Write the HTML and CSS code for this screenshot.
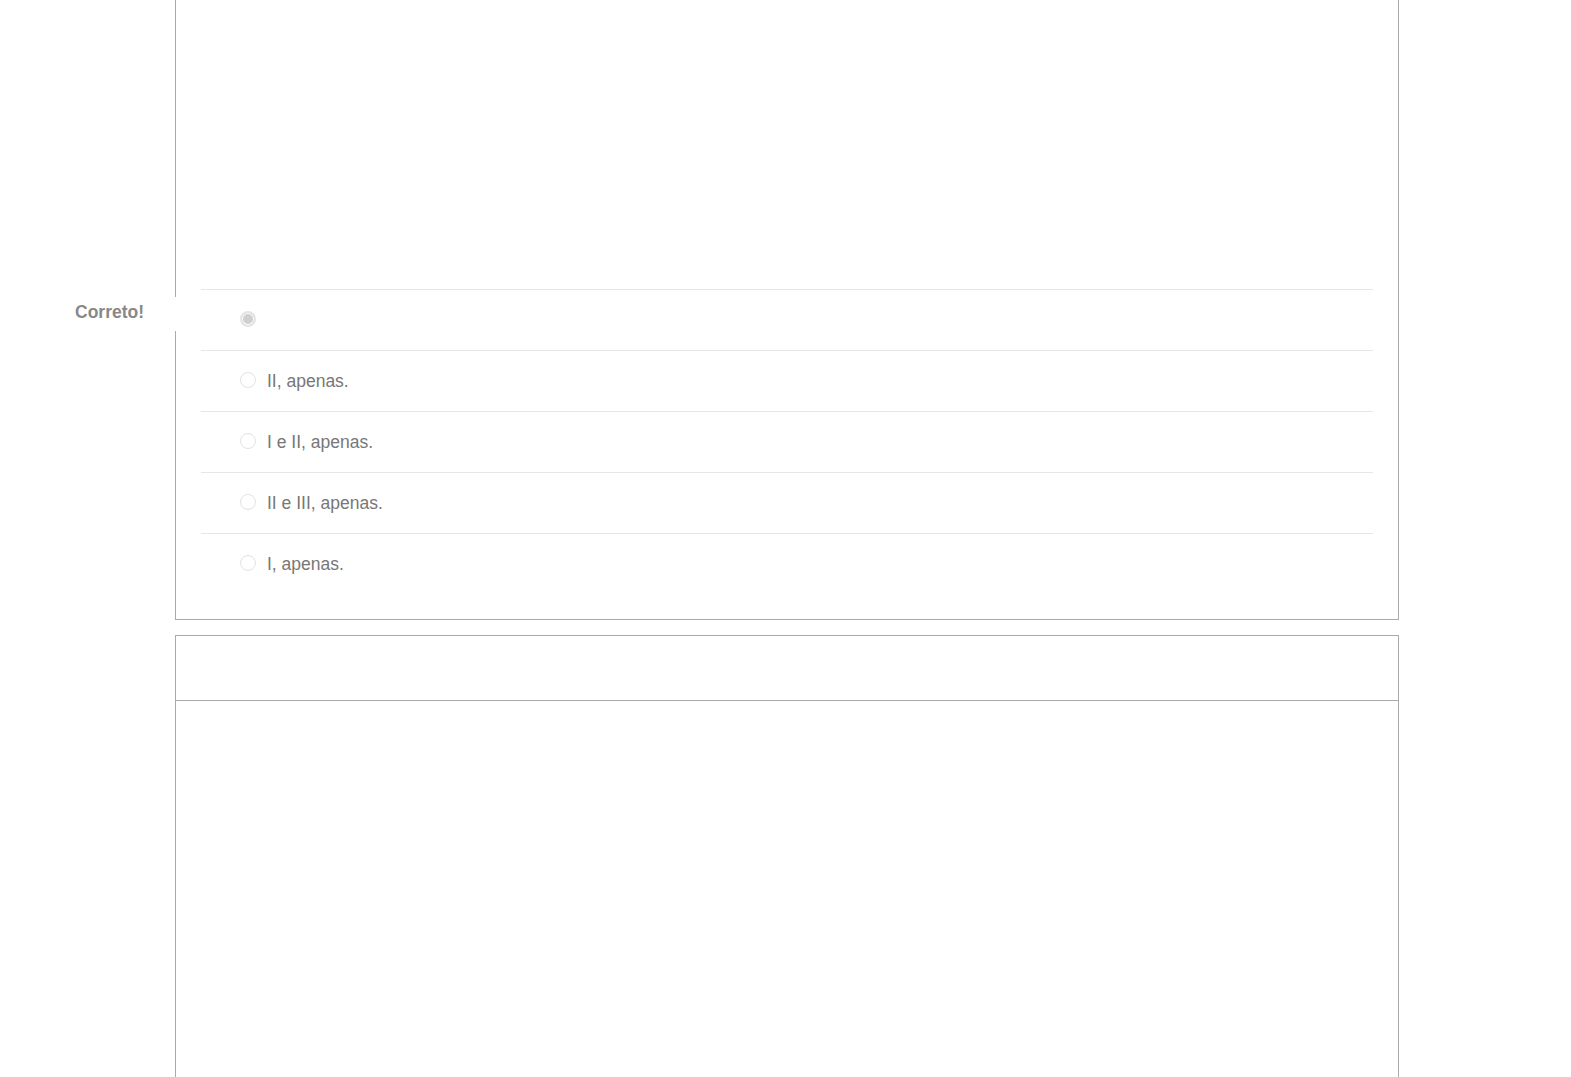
FILE: index.html
```html
<!DOCTYPE html>
<html lang="pt">
<head>
<meta charset="utf-8">
<title>Quiz</title>
<link rel="stylesheet" href="styles.css">
</head>
<body>
<div class="page">
  <div class="card card-top">
    <div class="question-text"></div>
    <div class="answers">
      <div class="answer correct">
        <div class="answer-flag">Correto!</div>
        <span class="radio checked"></span>
        <span class="answer-text"></span>
      </div>
      <div class="answer">
        <span class="radio"></span>
        <span class="answer-text">II, apenas.</span>
      </div>
      <div class="answer">
        <span class="radio"></span>
        <span class="answer-text">I e II, apenas.</span>
      </div>
      <div class="answer">
        <span class="radio"></span>
        <span class="answer-text">II e III, apenas.</span>
      </div>
      <div class="answer">
        <span class="radio"></span>
        <span class="answer-text">I, apenas.</span>
      </div>
    </div>
  </div>
  <div class="card card-bottom">
    <div class="card-header"></div>
    <div class="card-body"></div>
  </div>
</div>
</body>
</html>
```

FILE: styles.css
```css
html, body {
  margin: 0;
  padding: 0;
  background: #fff;
  font-family: "Liberation Sans", Arial, sans-serif;
  overflow: hidden;
}
.page {
  width: 1224px;
  margin-left: 175px;
  display: flex;
  flex-direction: column;
  gap: 15px;
}
.card {
  border: 1px solid #aaaaaa;
  box-sizing: border-box;
  position: relative;
}
.card-top {
  border-top: none;
  height: 620px;
}
.question-text {
  height: 289px;
}
.answers {
  margin: 0 25px;
}
.answer {
  position: relative;
  display: flex;
  align-items: center;
  height: 61px;
  box-sizing: border-box;
  border-top: 1px solid #e6e6e6;
  padding-left: 39px;
  padding-bottom: 2px;
}
.radio {
  width: 14px;
  height: 14px;
  border-radius: 50%;
  border: 1px solid #e2e2e2;
  background: #fff;
  flex: none;
  box-sizing: content-box;
}
.radio.checked {
  width: 12px;
  height: 12px;
  border: 2px solid #e4e4e4;
  background: #cfcfcf;
  box-shadow: inset 0 0 0 1px #fff;
}
.answer-text {
  margin-left: 11px;
  margin-top: 2px;
  font-size: 17.5px;
  color: #777777;
}
.answer-flag {
  position: absolute;
  left: -127px;
  top: 7px;
  width: 102px;
  height: 34px;
  background: #fff;
  font-size: 17.5px;
  font-weight: bold;
  color: #888888;
  line-height: 30px;
  box-sizing: border-box;
  padding-left: 1px;
}
.card-bottom {
  height: 480px;
}
.card-header {
  height: 64px;
  border-bottom: 1px solid #aaaaaa;
}
```
